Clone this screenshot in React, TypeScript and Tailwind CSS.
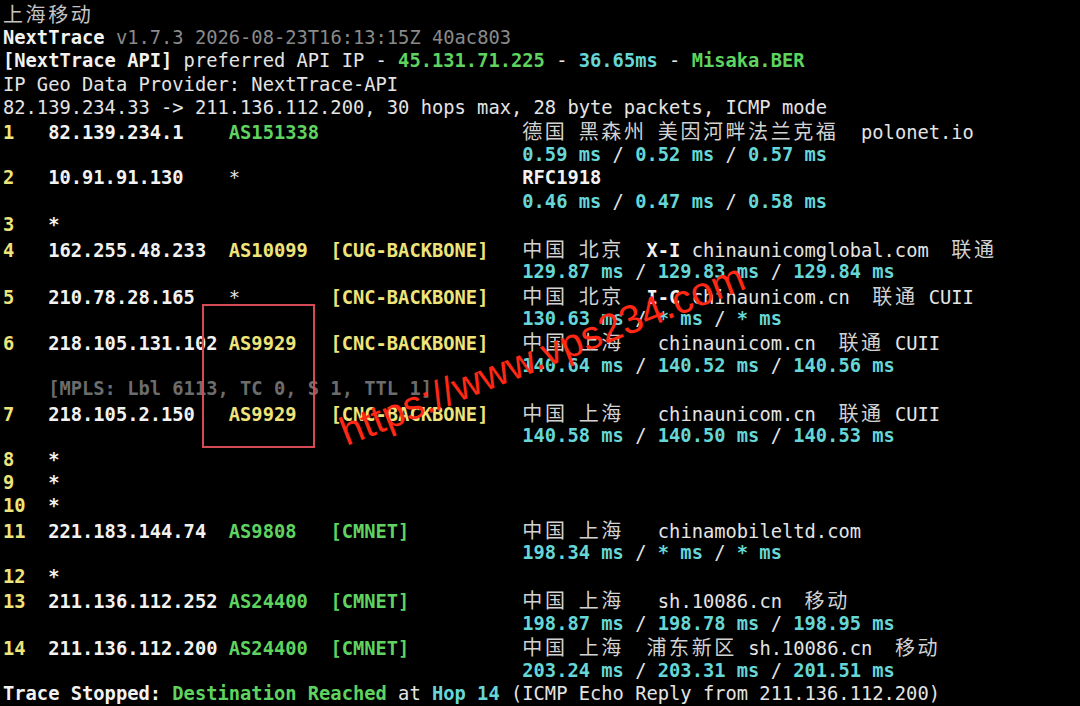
import React from "react";

// terminal palette
const Y = "font-bold text-[#efe47a]";
const G = "font-bold text-[#5fd35f]";
const C = "font-bold text-[#66d6d6]";
const WB = "font-bold text-[#f2f2f2]";
const W = "text-[#e4e4e4]";
const GR = "text-[#8a8a8a]";
const CJ = "text-[#d2d2d2]";
const DIM = "font-bold text-[#6c6c6c]";

type Seg = [string, string];

const GEO = " ".repeat(46);

const lat = (a: string, b: string, c: string): Seg[] => [
  [GEO, W],
  [a + " ms", C],
  [" / ", W],
  [b + " ms", C],
  [" / ", W],
  [c + " ms", C],
];

const hop = (n: string, ip: string, rest: Seg[]): Seg[] => [
  [n.padEnd(4), Y],
  [ip.padEnd(16), WB],
  ...rest,
];

const star = (n: string): Seg[] => [
  [n.padEnd(4), Y],
  ["*", WB],
];

const lines: Seg[][] = [
  [["上海移动", "text-[#c4c4c4]"]],
  [
    ["NextTrace", WB],
    [" v1.7.3 2026-08-23T16:13:15Z 40ac803", GR],
  ],
  [
    ["[NextTrace API]", WB],
    [" preferred API IP - ", W],
    ["45.131.71.225", G],
    [" - ", W],
    ["36.65ms", C],
    [" - ", W],
    ["Misaka.BER", G],
  ],
  [["IP Geo Data Provider: NextTrace-API", W]],
  [["82.139.234.33 -> 211.136.112.200, 30 hops max, 28 byte packets, ICMP mode", W]],
  hop("1", "82.139.234.1", [
    ["AS151338".padEnd(26), G],
    ["德国 黑森州 美因河畔法兰克福  ", CJ],
    ["polonet.io", W],
  ]),
  lat("0.59", "0.52", "0.57"),
  hop("2", "10.91.91.130", [
    ["*".padEnd(26), W],
    ["RFC1918", WB],
  ]),
  lat("0.46", "0.47", "0.58"),
  star("3"),
  hop("4", "162.255.48.233", [
    ["AS10099".padEnd(9), Y],
    ["[CUG-BACKBONE]".padEnd(17), Y],
    ["中国 北京  ", CJ],
    ["X-I", WB],
    [" chinaunicomglobal.com  ", W],
    ["联通", CJ],
  ]),
  lat("129.87", "129.83", "129.84"),
  hop("5", "210.78.28.165", [
    ["*".padEnd(9), W],
    ["[CNC-BACKBONE]".padEnd(17), Y],
    ["中国 北京  ", CJ],
    ["I-C", WB],
    [" chinaunicom.cn  ", W],
    ["联通", CJ],
    [" CUII", W],
  ]),
  lat("130.63", "*", "*"),
  hop("6", "218.105.131.102", [
    ["AS9929".padEnd(9), Y],
    ["[CNC-BACKBONE]".padEnd(17), Y],
    ["中国 上海   ", CJ],
    ["chinaunicom.cn  ", W],
    ["联通", CJ],
    [" CUII", W],
  ]),
  lat("140.64", "140.52", "140.56"),
  [["    [MPLS: Lbl 6113, TC 0, S 1, TTL 1]", DIM]],
  hop("7", "218.105.2.150", [
    ["AS9929".padEnd(9), Y],
    ["[CNC-BACKBONE]".padEnd(17), Y],
    ["中国 上海   ", CJ],
    ["chinaunicom.cn  ", W],
    ["联通", CJ],
    [" CUII", W],
  ]),
  lat("140.58", "140.50", "140.53"),
  star("8"),
  star("9"),
  star("10"),
  hop("11", "221.183.144.74", [
    ["AS9808".padEnd(9), G],
    ["[CMNET]".padEnd(17), G],
    ["中国 上海   ", CJ],
    ["chinamobileltd.com", W],
  ]),
  lat("198.34", "*", "*"),
  star("12"),
  hop("13", "211.136.112.252", [
    ["AS24400".padEnd(9), G],
    ["[CMNET]".padEnd(17), G],
    ["中国 上海   ", CJ],
    ["sh.10086.cn  ", W],
    ["移动", CJ],
  ]),
  lat("198.87", "198.78", "198.95"),
  hop("14", "211.136.112.200", [
    ["AS24400".padEnd(9), G],
    ["[CMNET]".padEnd(17), G],
    ["中国 上海  浦东新区 ", CJ],
    ["sh.10086.cn  ", W],
    ["移动", CJ],
  ]),
  lat("203.24", "203.31", "201.51"),
  [
    ["Trace Stopped: ", WB],
    ["Destination Reached", G],
    [" at ", W],
    ["Hop 14", C],
    [" (ICMP Echo Reply from 211.136.112.200)", W],
  ],
];

// CJK glyphs take two terminal cells
const CJK_RE = /([\u3000-\u9fff\uff00-\uffef]+)/;

function Text({ text }: { text: string }) {
  return (
    <>
      {text.split(CJK_RE).map((part, i) =>
        i % 2 === 1 ? (
          <span
            key={i}
            className="font-['Noto_Sans_CJK_SC',sans-serif] font-normal text-[20px] tracking-[2.58px]"
          >
            {part}
          </span>
        ) : (
          part
        )
      )}
    </>
  );
}

export default function App() {
  return (
    <div className="relative w-[1080px] h-[706px] overflow-hidden bg-black pl-[3px] pt-[2.3px] font-['DejaVu_Sans_Mono',monospace] text-[18.75px] leading-[23.45px]">
      {lines.map((line, i) => (
        <div key={i} className="h-[23.45px] whitespace-pre">
          {line.map(([t, cls], j) => (
            <span key={j} className={cls}>
              <Text text={t} />
            </span>
          ))}
        </div>
      ))}

      {/* highlight box */}
      <div className="absolute left-[202px] top-[304px] w-[113px] h-[144px] border-2 border-[#d64a55]" />

      {/* watermark */}
      <span className="absolute left-[542px] top-[354px] -translate-x-1/2 -translate-y-1/2 rotate-[-21.5deg] whitespace-nowrap font-['Liberation_Sans',sans-serif] text-[40px] leading-none text-[#ff2814]">
        https://www.vps234.com
      </span>
    </div>
  );
}
